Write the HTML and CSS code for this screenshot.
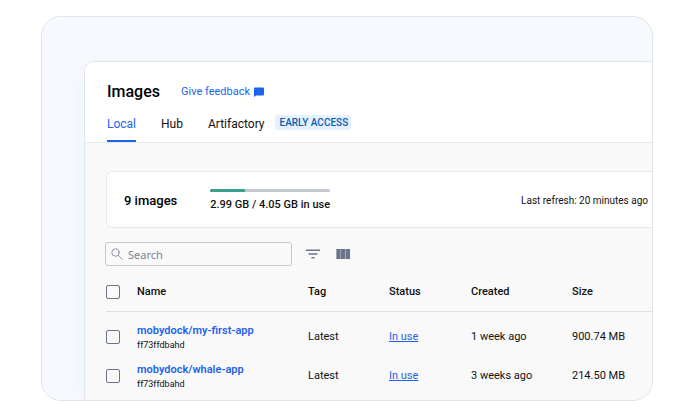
FILE: index.html
```html
<!DOCTYPE html>
<html lang="en">
<head>
<meta charset="utf-8">
<title>Images</title>
<link rel="stylesheet" href="styles.css">
</head>
<body>
<div class="frame">
  <main class="window">
    <header class="header">
      <div class="title-row">
        <h1 class="title">Images</h1>
        <a class="feedback" href="#">Give feedback
          <svg class="feedback-icon" viewBox="0 0 10 10" width="10" height="10" aria-hidden="true"><path d="M1 .5h8a1 1 0 0 1 1 1v6a1 1 0 0 1-1 1H2L0 10V1.500a1 1 0 0 1 1-1z" fill="currentColor"/></svg>
        </a>
      </div>
      <nav class="tabs">
        <a class="tab tab-active" href="#">Local</a>
        <a class="tab" href="#">Hub</a>
        <a class="tab" href="#">Artifactory</a>
        <span class="badge">EARLY ACCESS</span>
      </nav>
    </header>
    <section class="content">
      <div class="summary">
        <h2 class="count">9 images</h2>
        <div class="usage">
          <div class="bar"><div class="bar-fill"></div></div>
          <div class="usage-text">2.99 GB / 4.05 GB in use</div>
        </div>
        <div class="refresh">Last refresh: 20 minutes ago</div>
      </div>
      <div class="toolbar">
        <label class="search">
          <svg viewBox="0 0 12 12" width="12" height="12" aria-hidden="true"><g fill="none" stroke="#858b9a" stroke-width=".9" stroke-linecap="round"><circle cx="4.500" cy="4.500" r="3.700"/><path d="M7.300 7.300l4 4"/></g></svg>
          <input class="search-input" type="text" placeholder="Search" aria-label="Search">
        </label>
        <button class="icon-button filter" type="button" aria-label="Filter">
          <svg viewBox="0 0 14 10" width="14" height="10"><path d="M0 .5h14v1.500H0zM2.500 4.200h9v1.500h-9zM5.500 8h3v1.500h-3z" fill="#6a738c"/></svg>
        </button>
        <button class="icon-button" type="button" aria-label="Columns">
          <svg viewBox="0 0 14 10" width="14" height="10"><path d="M.5 0h13.500v10H.5z" fill="#a9aebc"/><path d="M.5 0h3.700v10H.5zM5 0h4v10H5zM10 0h4v10h-4z" fill="#6a738c"/></svg>
        </button>
      </div>
      <table class="table">
        <colgroup><col class="col-check"><col class="col-name"><col class="col-tag"><col class="col-status"><col class="col-created"><col></colgroup>
        <thead>
          <tr><th><input class="check" type="checkbox" aria-label="Select all"></th><th>Name</th><th>Tag</th><th>Status</th><th>Created</th><th>Size</th></tr>
        </thead>
        <tbody>
          <tr>
            <td><input class="check" type="checkbox" aria-label="Select mobydock/my-first-app"></td>
            <td><a class="name" href="#">mobydock/my-first-app</a><span class="hash">ff73ffdbahd</span></td>
            <td>Latest</td><td><a class="status" href="#">In use</a></td><td>1 week ago</td><td>900.74 MB</td>
          </tr>
          <tr>
            <td><input class="check" type="checkbox" aria-label="Select mobydock/whale-app"></td>
            <td><a class="name" href="#">mobydock/whale-app</a><span class="hash">ff73ffdbahd</span></td>
            <td>Latest</td><td><a class="status" href="#">In use</a></td><td>3 weeks ago</td><td>214.50 MB</td>
          </tr>
        </tbody>
      </table>
    </section>
  </main>
</div>
</body>
</html>
```
FILE: styles.css
```css
* {
  box-sizing: border-box;
}

body {
  margin: 0;
  background: #fff;
  color: #111;
  font-family: Roboto, "Liberation Sans", sans-serif;
  font-size: 11px;
  line-height: 14px;
}

a {
  color: #1d63ed;
  text-decoration: none;
}

.frame {
  margin: 16px 33px 15px 41px;
  padding: 44px 0 0 42px;
  border: 1px solid #e1e5e9;
  border-radius: 20px;
  background: #f6fafe;
  overflow: hidden;
}

.window {
  border: solid #e2e6ea;
  border-width: 1px 0 0 1px;
  border-radius: 10px 0 0 0;
  background: #f9f9f9;
  box-shadow: 0 4px 20px rgba(40, 70, 100, 0.04);
  overflow: hidden;
}

.header {
  padding: 20px 0 0 22px;
  border-bottom: 1px solid #e8e9eb;
  background: #fff;
}

.title-row {
  display: flex;
  align-items: center;
  gap: 21px;
  height: 20px;
}

.title {
  margin: 0;
  font-size: 16px;
  line-height: 20px;
  font-weight: 500;
  color: #000;
}

.feedback {
  display: flex;
  align-items: center;
  gap: 4px;
}

.tabs {
  display: flex;
  align-items: flex-start;
  margin-top: 12px;
}

.tab {
  height: 28px;
  margin-right: 25px;
  padding-top: 2px;
  font-size: 12px;
  line-height: 16px;
  color: #111;
}

.tab-active {
  border-bottom: 2px solid #1d63ed;
  color: #1d63ed;
}

.badge {
  margin-left: -14px;
  margin-top: 1px;
  padding: 0 3px 0 4px;
  border-radius: 3px;
  background: #e5f2fc;
  color: #0d5cb5;
  font-size: 10px;
  line-height: 15px;
  font-weight: 500;
}

.content {
  padding: 28px 0 5px 20px;
}

.summary {
  display: flex;
  align-items: center;
  height: 57px;
  margin-left: 1px;
  padding: 2px 4px 0 17px;
  border: 1px solid #e6e7e9;
  border-right: 0;
  border-radius: 6px 0 0 6px;
  background: #fff;
}

.count {
  margin: 0 33px 0 0;
  font-size: 13px;
  line-height: 18px;
  font-weight: 500;
  color: #000;
}

.bar {
  height: 3px;
  margin-bottom: 6px;
  border-radius: 2px;
  background: #c4c8d1;
  overflow: hidden;
}

.bar-fill {
  width: 29%;
  height: 100%;
  background: #3ba08d;
}

.usage-text {
  font-weight: 500;
}

.refresh {
  margin-left: auto;
  font-size: 10px;
}

.toolbar {
  display: flex;
  align-items: center;
  margin-top: 14px;
}

.search {
  display: flex;
  align-items: center;
  gap: 5px;
  width: 187px;
  height: 24px;
  padding: 0 5px;
  border: 1px solid #c4c8d1;
  border-radius: 3px;
}

.search-input {
  flex: 1;
  min-width: 0;
  padding: 0;
  border: 0;
  outline: 0;
  background: transparent;
  font-family: "Noto Sans", sans-serif;
  font-size: 11px;
}

.search-input::placeholder {
  color: #7c8293;
}

.icon-button {
  display: flex;
  padding: 0 0 1px;
  border: 0;
  background: none;
}

.filter {
  margin: 0 16px 0 14px;
}

.table {
  width: calc(100% - 1px);
  margin: 5px 0 0 1px;
  border-collapse: collapse;
  table-layout: fixed;
}

.col-check {
  width: 31px;
}

.col-name {
  width: 171px;
}

.col-tag {
  width: 81px;
}

.col-status {
  width: 82px;
}

.col-created {
  width: 101px;
}

th,
td {
  height: 39px;
  padding: 0;
  text-align: left;
  vertical-align: middle;
}

th {
  height: 40px;
  padding-top: 2px;
  border-bottom: 1px solid #dfe1e4;
  font-weight: 500;
}

tbody::before {
  content: "";
  display: table-row;
  height: 6px;
}

.check {
  display: block;
  appearance: none;
  width: 14px;
  height: 14px;
  margin: 0;
  border: 1px solid #6a738c;
  border-radius: 2px;
}

.name,
.hash {
  display: block;
}

.name {
  padding-top: 2px;
  font-weight: 600;
}

.hash {
  font-size: 9px;
}

.status {
  text-decoration: underline;
}
```
